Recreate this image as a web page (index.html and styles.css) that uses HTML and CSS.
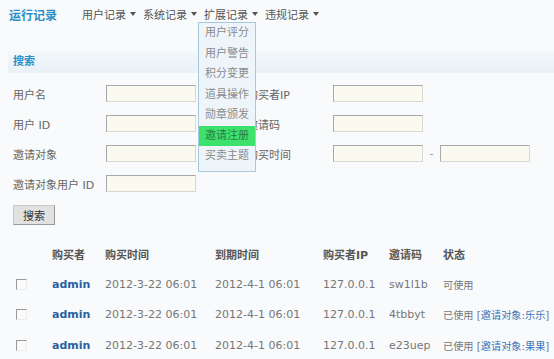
FILE: index.html
```html
<!DOCTYPE html>
<html lang="zh">
<head>
<meta charset="utf-8">
<link rel="stylesheet" href="styles.css">
</head>
<body>
<div class="nav">
  <span class="brand">运行记录</span>
  <span class="item">用户记录<i class="caret"></i></span>
  <span class="item">系统记录<i class="caret"></i></span>
  <span class="item has-menu">扩展记录<i class="caret"></i>
    <ul class="menu">
      <li>用户评分</li>
      <li>用户警告</li>
      <li>积分变更</li>
      <li>道具操作</li>
      <li>勋章颁发</li>
      <li class="active">邀请注册</li>
      <li>买卖主题</li>
    </ul>
  </span>
  <span class="item">违规记录<i class="caret"></i></span>
</div>

<div class="bar">搜索</div>

<div class="form">
  <div class="row">
    <label class="lab">用户名</label><span class="inp"></span>
    <label class="lab2">购买者IP</label><span class="inp"></span>
  </div>
  <div class="row">
    <label class="lab">用户 ID</label><span class="inp"></span>
    <label class="lab2">邀请码</label><span class="inp"></span>
  </div>
  <div class="row">
    <label class="lab">邀请对象</label><span class="inp"></span>
    <label class="lab2">购买时间</label><span class="inp"></span>
    <span class="dash">-</span><span class="inp"></span>
  </div>
  <div class="row">
    <label class="lab">邀请对象用户 ID</label><span class="inp"></span>
  </div>
  <button class="btn">搜索</button>
</div>

<table class="list">
  <colgroup>
    <col class="c0"><col class="c1"><col class="c2"><col class="c3"><col class="c4"><col class="c5"><col>
  </colgroup>
  <thead>
    <tr><th></th><th>购买者</th><th>购买时间</th><th>到期时间</th><th>购买者IP</th><th>邀请码</th><th>状态</th></tr>
  </thead>
  <tbody>
    <tr><td><span class="cb"></span></td><td class="user">admin</td><td>2012-3-22 06:01</td><td>2012-4-1 06:01</td><td>127.0.0.1</td><td>sw1l1b</td><td class="st">可使用</td></tr>
    <tr><td><span class="cb"></span></td><td class="user">admin</td><td>2012-3-22 06:01</td><td>2012-4-1 06:01</td><td>127.0.0.1</td><td>4tbbyt</td><td class="st">已使用 [<span class="lnk">邀请对象:乐乐</span>]</td></tr>
    <tr><td><span class="cb"></span></td><td class="user">admin</td><td>2012-3-22 06:01</td><td>2012-4-1 06:01</td><td>127.0.0.1</td><td>e23uep</td><td class="st">已使用 [<span class="lnk">邀请对象:果果</span>]</td></tr>
  </tbody>
</table>
</body>
</html>
```
FILE: styles.css
```css
html, body {
  margin: 0;
  padding: 0;
}
body {
  background: #f8fafb;
  font-family: "DejaVu Sans", "Noto Sans CJK SC", sans-serif;
  font-size: 11px;
  color: #666;
  width: 554px;
  height: 359px;
  overflow: hidden;
}
.nav {
  height: 28px;
  display: flex;
  align-items: center;
  padding-left: 9px;
  position: relative;
}
.brand {
  font-size: 12px;
  font-weight: bold;
  color: #2d8fc6;
  margin-right: 25px;
}
.item {
  display: inline-flex;
  align-items: center;
  color: #555;
  margin-right: 7px;
  position: relative;
  height: 28px;
}
.caret {
  display: inline-block;
  width: 0;
  height: 0;
  border-left: 3px solid transparent;
  border-right: 3px solid transparent;
  border-top: 4px solid #555;
  margin-left: 4px;
}
.menu {
  position: absolute;
  left: -6px;
  top: 22px;
  width: 56px;
  margin: 0;
  padding: 0 0 4px 0;
  list-style: none;
  background: #eef5fa;
  border: 1px solid #a8c8de;
  z-index: 5;
}
.menu li {
  line-height: 20.5px;
  height: 20.5px;
  text-align: center;
  color: #8a8a8a;
}
.menu li.active {
  background: #3ce26c;
  color: #2a7a45;
}
.bar {
  margin: 23px 0 0 8px;
  height: 22px;
  line-height: 22px;
  padding-left: 5px;
  background: linear-gradient(#f2f7fb, #e9f1f7);
  color: #2d8fc6;
  font-weight: bold;
}
.form {
  padding: 12px 0 0 13px;
}
.row {
  display: flex;
  align-items: center;
  height: 17px;
  margin-bottom: 13px;
}
.lab {
  width: 93px;
}
.lab2 {
  width: 86px;
  margin-left: 51px;
}
.inp {
  display: inline-block;
  box-sizing: border-box;
  width: 90px;
  height: 17px;
  background: #fafaf0;
  border: 1px solid #d8d8d0;
  border-top-color: #a8a8a8;
  border-left-color: #a8a8a8;
}
.dash {
  width: 17px;
  text-align: center;
  color: #999;
}
.btn {
  display: block;
  box-sizing: border-box;
  width: 42px;
  height: 20px;
  margin: 0;
  padding: 0;
  font: inherit;
  color: #333;
  background: #e1e1e1;
  border: 1px solid #c8c8c8;
  border-right-color: #999;
  border-bottom-color: #999;
}
.list {
  margin-top: 14px;
  border-collapse: collapse;
  table-layout: fixed;
  width: 554px;
}
.c0 { width: 52px; }
.c1 { width: 53px; }
.c2 { width: 110px; }
.c3 { width: 108px; }
.c4 { width: 66px; }
.c5 { width: 54px; }
.list th {
  height: 30px;
  padding: 0;
  text-align: left;
  font-weight: bold;
  color: #555;
}
.list td {
  height: 30.5px;
  padding: 0;
  color: #777;
  white-space: nowrap;
}
.list td.st {
  font-size: 10.2px;
}
.cb {
  display: block;
  box-sizing: border-box;
  width: 11px;
  height: 11px;
  margin-left: 16px;
  border: 1px solid #ececec;
  border-top-color: #999;
  border-left-color: #999;
}
.list td.user {
  color: #2b5f9e;
  font-weight: bold;
}
.lnk {
  color: #3a72b4;
}
```
